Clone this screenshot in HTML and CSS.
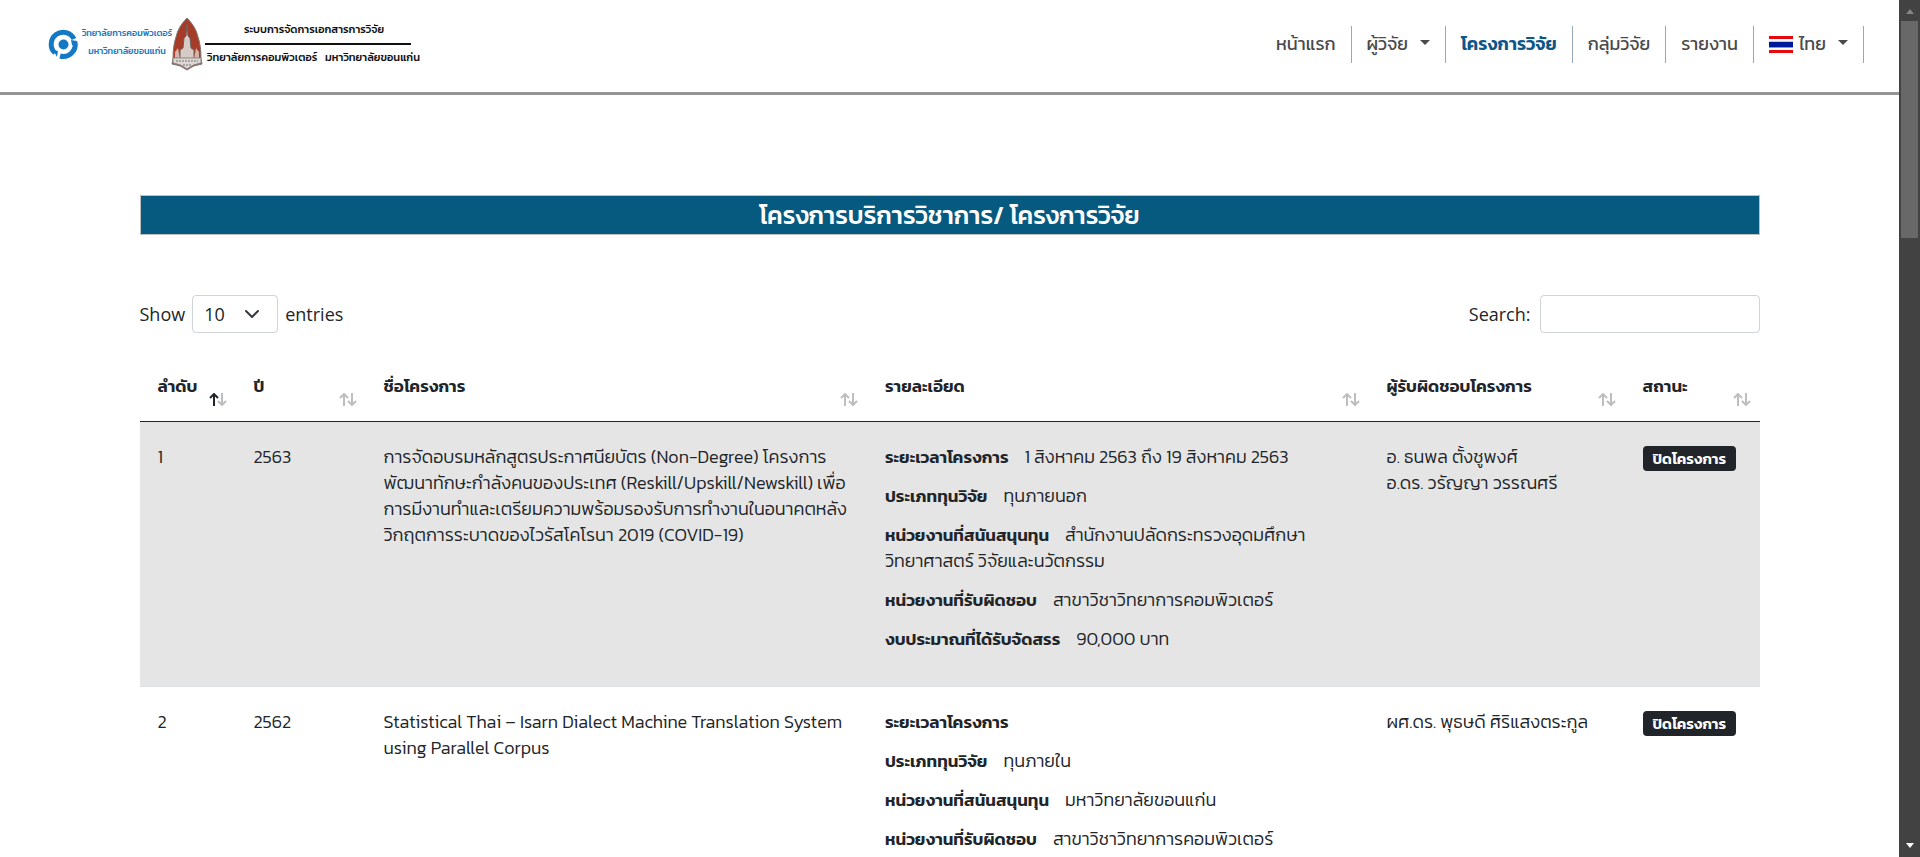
FILE: index.html
```html
<!DOCTYPE html>
<html lang="th">
<head>
<meta charset="utf-8">
<title>โครงการวิจัย</title>
<link rel="stylesheet" href="styles.css">
</head>
<body>
<div class="page">
  <header class="navbar">
    <a class="brand" href="#" aria-label="วิทยาลัยการคอมพิวเตอร์">
      <svg class="brand-logo" viewBox="0 0 380 60" role="img">
        <g fill="none" stroke="#1379c4" stroke-width="5">
          <path d="M26 25A12 12 0 1 0 7 39"/>
          <path d="M27 28A12 12 0 0 1 12 42"/>
        </g>
        <path d="M5 36l4 7 1-6zM23 26l6 1-1 5-4-1z" fill="#1379c4"/>
        <circle cx="15.5" cy="30.5" r="5" fill="#1379c4"/>
        <text class="logo-blue" x="79" y="22" text-anchor="middle">วิทยาลัยการคอมพิวเตอร์</text>
        <text class="logo-blue" x="79" y="40" text-anchor="middle">มหาวิทยาลัยขอนแก่น</text>
        <path d="M139 4q9 9 11 19 3 8 3 22l1 5q-9 1-15 6-6-5-15-6l1-5q0-14 3-22 2-10 11-19z" fill="#a63c28" stroke="#7c7774" stroke-width="1"/>
        <path d="M139 10l1 12 2 2 1 10 3 2v10h-14V36l3-2 1-10 2-2z" fill="#d8cbc6" stroke="#6f5d58" stroke-width="1"/>
        <path d="M127 45v-7l3-4 2 11zM151 45v-7l-3-4-2 11z" fill="#d3b3aa"/>
        <path d="M125 44h28v5q-8 1-14 6-6-5-14-6z" fill="#ddd8d5" stroke="#8b8583" stroke-width="1"/>
        <path d="M128 47h22M135 51h8" stroke="#77706d" stroke-width="1" stroke-dasharray="2 1"/>
        <text class="logo-black" x="266" y="19" text-anchor="middle">ระบบการจัดการเอกสารการวิจัย</text>
        <path d="M157 30H363" stroke="#111" stroke-width="2"/>
        <text class="logo-black" x="159" y="47">วิทยาลัยการคอมพิวเตอร์</text>
        <text class="logo-black" x="277" y="47">มหาวิทยาลัยขอนแก่น</text>
      </svg>
    </a>
    <nav class="menu">
      <a href="#">หน้าแรก</a>
      <a class="drop" href="#">ผู้วิจัย</a>
      <a class="active" href="#">โครงการวิจัย</a>
      <a href="#">กลุ่มวิจัย</a>
      <a href="#">รายงาน</a>
      <a class="drop" href="#"><span class="flag"></span>ไทย</a>
    </nav>
  </header>

  <main class="container">
    <h1 class="title">โครงการบริการวิชาการ/ โครงการวิจัย</h1>
    <div class="controls">
      <label class="control">Show
        <select class="length"><option>10</option><option>25</option><option>50</option></select>
        entries</label>
      <label class="control">Search:
        <input class="search" type="search"></label>
    </div>
    <table class="projects">
      <colgroup><col class="c-no"><col class="c-year"><col><col><col class="c-owner"><col class="c-status"></colgroup>
      <thead>
        <tr>
          <th><div class="head asc">ลำดับ<svg class="sort" viewBox="0 0 18 13"><path d="M5 13V1M1 5l4-4 4 4"/><path d="M13 0v12M9 8l4 4 4-4"/></svg></div></th>
          <th><div class="head">ปี<svg class="sort" viewBox="0 0 18 13"><path d="M5 13V1M1 5l4-4 4 4"/><path d="M13 0v12M9 8l4 4 4-4"/></svg></div></th>
          <th><div class="head">ชื่อโครงการ<svg class="sort" viewBox="0 0 18 13"><path d="M5 13V1M1 5l4-4 4 4"/><path d="M13 0v12M9 8l4 4 4-4"/></svg></div></th>
          <th><div class="head">รายละเอียด<svg class="sort" viewBox="0 0 18 13"><path d="M5 13V1M1 5l4-4 4 4"/><path d="M13 0v12M9 8l4 4 4-4"/></svg></div></th>
          <th><div class="head">ผู้รับผิดชอบโครงการ<svg class="sort" viewBox="0 0 18 13"><path d="M5 13V1M1 5l4-4 4 4"/><path d="M13 0v12M9 8l4 4 4-4"/></svg></div></th>
          <th><div class="head">สถานะ<svg class="sort" viewBox="0 0 18 13"><path d="M5 13V1M1 5l4-4 4 4"/><path d="M13 0v12M9 8l4 4 4-4"/></svg></div></th>
        </tr>
      </thead>
      <tbody>
        <tr>
          <td>1</td>
          <td>2563</td>
          <td>การจัดอบรมหลักสูตรประกาศนียบัตร (Non-Degree) โครงการ<br>พัฒนาทักษะกำลังคนของประเทศ (Reskill/Upskill/Newskill) เพื่อ<br>การมีงานทำและเตรียมความพร้อมรองรับการทำงานในอนาคตหลัง<br>วิกฤตการระบาดของไวรัสโคโรนา 2019 (COVID-19)</td>
          <td>
            <p><b>ระยะเวลาโครงการ</b>1 สิงหาคม 2563 ถึง 19 สิงหาคม 2563</p>
            <p><b>ประเภททุนวิจัย</b>ทุนภายนอก</p>
            <p><b>หน่วยงานที่สนันสนุนทุน</b>สำนักงานปลัดกระทรวงอุดมศึกษา<br>วิทยาศาสตร์ วิจัยและนวัตกรรม</p>
            <p><b>หน่วยงานที่รับผิดชอบ</b>สาขาวิชาวิทยาการคอมพิวเตอร์</p>
            <p><b>งบประมาณที่ได้รับจัดสรร</b>90,000 บาท</p>
          </td>
          <td>อ. ธนพล ตั้งชูพงศ์<br>อ.ดร. วรัญญา วรรณศรี</td>
          <td><span class="badge">ปิดโครงการ</span></td>
        </tr>
        <tr>
          <td>2</td>
          <td>2562</td>
          <td>Statistical Thai – Isarn Dialect Machine Translation System<br>using Parallel Corpus</td>
          <td>
            <p><b>ระยะเวลาโครงการ</b></p>
            <p><b>ประเภททุนวิจัย</b>ทุนภายใน</p>
            <p><b>หน่วยงานที่สนันสนุนทุน</b>มหาวิทยาลัยขอนแก่น</p>
            <p><b>หน่วยงานที่รับผิดชอบ</b>สาขาวิชาวิทยาการคอมพิวเตอร์</p>
          </td>
          <td>ผศ.ดร. พุธษดี ศิริแสงตระกูล</td>
          <td><span class="badge">ปิดโครงการ</span></td>
        </tr>
      </tbody>
    </table>
  </main>
</div>
<div class="scrollbar" aria-hidden="true">
  <span class="arrow up"></span>
  <span class="thumb"></span>
  <span class="arrow down"></span>
</div>
</body>
</html>
```
FILE: styles.css
```css
* { box-sizing: border-box; }
body {
  margin: 0;
  height: 100vh;
  overflow: hidden;
  display: flex;
  background: #fff;
  color: #212529;
  font-family: Kanit, "Noto Sans Thai", "Noto Sans", sans-serif;
  font-size: 17px;
  line-height: 26px;
}
.page { flex: 1; min-width: 0; }

.navbar {
  display: flex;
  justify-content: space-between;
  align-items: flex-start;
  padding: 14px 35px 18px 48px;
  border-bottom: 3px solid #949494;
}
.brand { display: block; }
.brand-logo { display: block; width: 380px; height: 60px; }
.logo-blue { fill: #1379c4; font-size: 9px; font-weight: 500; }
.logo-black { fill: #111; font-size: 11px; font-weight: 500; }
.menu { display: flex; padding-top: 12px; }
.menu a {
  display: flex;
  align-items: center;
  height: 37px;
  padding: 0 15px 1px;
  border-right: 1px solid #97a9b9;
  color: #4a4a4a;
  font-size: 18px;
  text-decoration: none;
}
.menu .active { color: #0f5687; font-weight: 600; }
.drop::after {
  content: "";
  margin: 0 0 3px 12px;
  border: 5px solid transparent;
  border-top-color: #4a4a4a;
  border-bottom: 0;
}
.flag {
  width: 24px;
  height: 17px;
  margin-right: 6px;
  background: linear-gradient(#e80a0a 3px, #fff 3px 5px, #c3c8e8 5px 6px, #001b9a 6px 11px, #8c97d0 11px 12px, #fff 12px 14px, #e80a0a 14px);
}

.container { width: 86%; max-width: 1620px; margin: 0 auto; padding-top: 100px; }
.title {
  margin: 0;
  border: 1px solid #c0c0c0;
  background: #065a7f;
  color: #fff;
  font-size: 25px;
  font-weight: 500;
  line-height: 38px;
  text-align: center;
}
.controls {
  display: flex;
  justify-content: space-between;
  margin-top: 60px;
  font-family: "Open Sans", "Noto Sans", sans-serif;
  font-size: 18px;
}
.control { display: flex; align-items: center; gap: 7px; }
.length, .search {
  height: 38px;
  border: 1px solid #ced4da;
  border-radius: 4px;
  background: #fff;
  color: #212529;
  font: inherit;
}
.length {
  width: 86px;
  padding: 0 11px;
  appearance: none;
  background: url("data:image/svg+xml,%3Csvg xmlns='http://www.w3.org/2000/svg' viewBox='0 0 16 16'%3E%3Cpath fill='none' stroke='%23343a40' stroke-linecap='round' stroke-linejoin='round' stroke-width='2' d='M2 5l6 6 6-6'/%3E%3C/svg%3E") no-repeat right 17px center / 16px 16px;
}
.search { width: 220px; margin-left: 2px; }

.projects { width: 100%; margin-top: 28px; border-collapse: collapse; table-layout: fixed; }
.c-no { width: 96px; }
.c-year { width: 130px; }
.c-owner { width: 256px; }
.c-status { width: 135px; }
.projects th { padding: 0; border-bottom: 1px solid #212529; text-align: left; font-weight: 600; }
.head { display: flex; justify-content: space-between; align-items: flex-start; padding: 12px 9px 15px 18px; }
.sort { flex: none; width: 18px; height: 13px; margin-top: 20px; fill: none; stroke: #bdbebf; stroke-width: 2; }
.asc .sort path:first-child { stroke: #212529; }
.projects td { padding: 22px 18px 21px; vertical-align: top; font-size: 18px; font-weight: 300; }
.projects tbody tr { border-bottom: 1px solid #dee2e6; }
.projects tbody tr:nth-child(odd) { background: #e5e5e5; }
.projects p { margin: 0 0 13px; }
.projects b { margin-right: 16px; font-size: 17px; font-weight: 600; }
.badge {
  display: inline-block;
  margin-top: 2px;
  padding: 0 10px;
  border-radius: 4px;
  background: #212529;
  color: #fff;
  font-size: 15px;
  font-weight: 600;
  line-height: 25px;
}

.scrollbar {
  display: flex;
  flex-direction: column;
  align-items: center;
  width: 21px;
  background: #424242;
}
.arrow { border: 4px solid transparent; }
.up { margin: 9px 0 7px; border-top: 0; border-bottom: 5px solid #858585; }
.down { margin: auto 0 9px; border-bottom: 0; border-top: 5px solid #fff; }
.thumb { width: 17px; height: 217px; background: #686868; }
```
